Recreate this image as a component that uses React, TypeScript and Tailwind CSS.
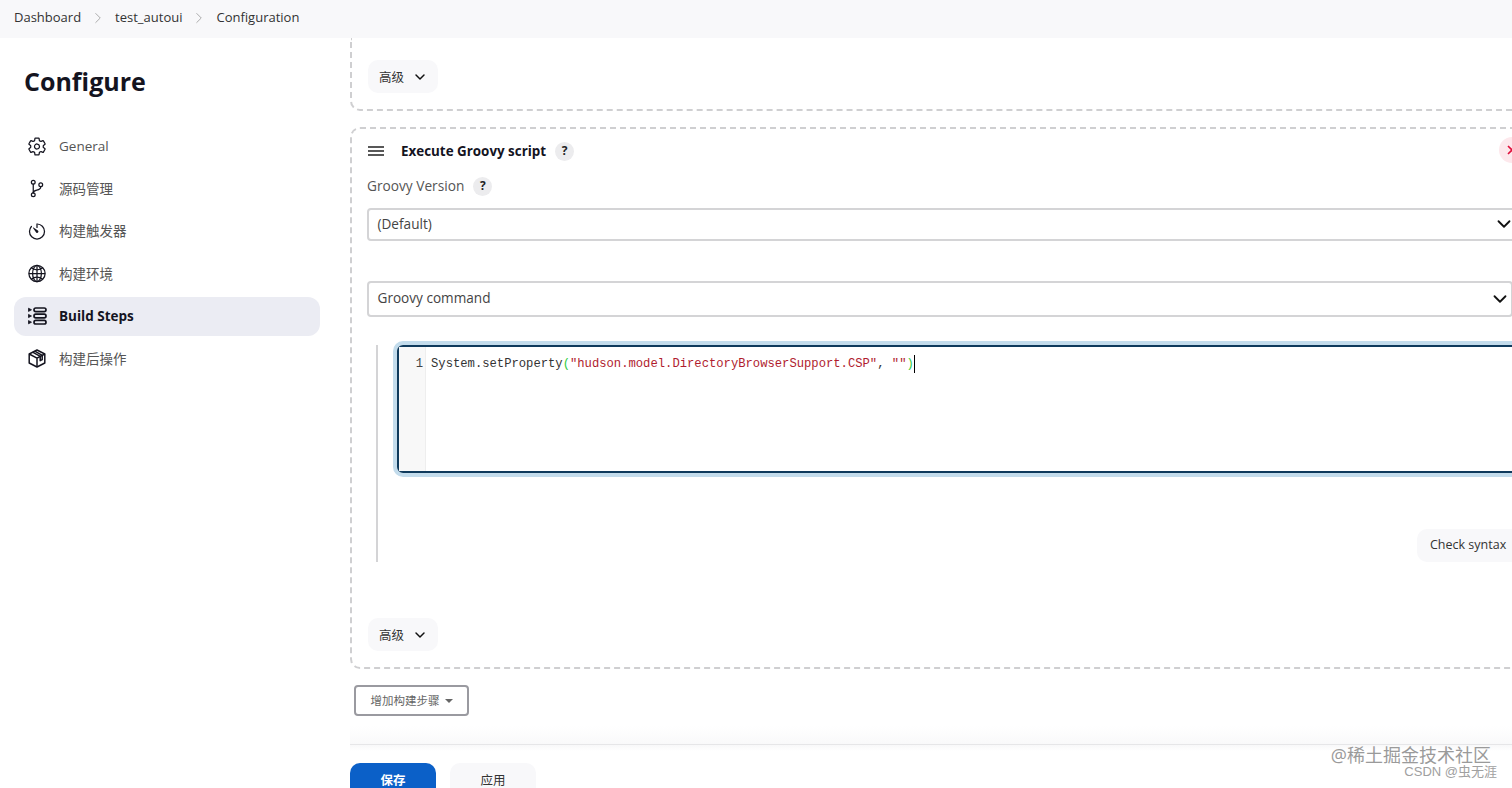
import { ChevronDown, ChevronRight } from "lucide-react";
import { IoGitBranchOutline, IoGlobeOutline, IoSettingsOutline, IoTimerOutline } from "react-icons/io5";
import type { ReactNode } from "react";

const FONT = "font-['Open_Sans','Noto_Sans_CJK_SC',sans-serif]";

function BuildStepsIcon() {
  return (
    <svg viewBox="0 0 20 20" className="h-5 w-5" fill="none" stroke="currentColor" strokeWidth="1.7">
      <rect x="7" y="2" width="12" height="3.6" rx="1.8" />
      <rect x="7" y="8.2" width="12" height="3.6" rx="1.8" />
      <rect x="7" y="14.4" width="12" height="3.6" rx="1.8" />
      <path d="M1.5 2.2l3 1.6-3 1.6zM1.5 8.4l3 1.6-3 1.6zM1.5 14.6l3 1.6-3 1.6z" fill="currentColor" strokeWidth="0.8" />
    </svg>
  );
}

// box with a packing strip over the lid
function BoxIcon() {
  return (
    <svg viewBox="0 0 20 20" className="h-[21px] w-[21px]" fill="none" stroke="currentColor" strokeWidth="1.5" strokeLinejoin="round">
      <path d="M10 1.5l7.8 4v9L10 18.5l-7.8-4v-9z" />
      <path d="M2.2 5.5L10 9.7l7.8-4.2M10 9.7v8.8" />
      <path d="M5.6 3.7l7.6 4.2v4.3l2-1V6.8L7.8 2.6" />
    </svg>
  );
}

const navItems: { label: string; icon: ReactNode; active?: boolean }[] = [
  { label: "General", icon: <IoSettingsOutline className="h-[21px] w-[21px]" /> },
  { label: "源码管理", icon: <IoGitBranchOutline className="h-[21px] w-[21px]" /> },
  { label: "构建触发器", icon: <IoTimerOutline className="h-[21px] w-[21px]" /> },
  { label: "构建环境", icon: <IoGlobeOutline className="h-[21px] w-[21px]" /> },
  { label: "Build Steps", icon: <BuildStepsIcon />, active: true },
  { label: "构建后操作", icon: <BoxIcon /> },
];

function Help() {
  return (
    <span className="flex h-[19px] w-[19px] items-center justify-center rounded-full bg-[#ececee] text-xs font-bold text-[#222]">
      ?
    </span>
  );
}

function AdvancedButton() {
  return (
    <button className="flex h-[33px] w-[70px] items-center justify-center gap-2 rounded-[10px] bg-[#f8f8fa] pl-[1px] pt-[3px] text-[12.5px] text-[#333]">
      高级
      <ChevronDown className="-mt-[3px] h-4 w-4 text-[#111]" strokeWidth={2.2} />
    </button>
  );
}

function SelectBox({ label, width, className }: { label: string; width: string; className: string }) {
  return (
    <div className={`flex items-center justify-between rounded-[4px] border-2 border-[#d4d4d6] pb-[1px] pl-[8.5px] text-[13.6px] text-[#444] ${width} ${className}`}>
      {label}
      <ChevronDown className="h-[22px] w-[22px] text-[#111]" strokeWidth={2} />
    </div>
  );
}

function Crumb() {
  return <ChevronRight className="mx-[8px] h-[18px] w-[18px] text-[#aaa]" strokeWidth={1.3} />;
}

export default function App() {
  return (
    <div className={`relative flex h-[788px] w-[1512px] flex-col overflow-hidden bg-white ${FONT}`}>
      <header className="flex h-[38px] shrink-0 items-center bg-[#f8f8fa] pb-[3px] pl-[14px] text-[13px] text-[#333]">
        <span>Dashboard</span>
        <Crumb />
        <span>test_autoui</span>
        <Crumb />
        <span>Configuration</span>
      </header>

      <div className="flex min-h-0 flex-1">
        <aside className="w-[350px] shrink-0 pl-[14px] pr-[30px]">
          <h1 className="pl-[10px] pt-[25px] text-[25px] leading-[36px] font-bold text-[#14141f]">Configure</h1>
          <nav className="mt-[28px] flex flex-col gap-[4px]">
            {navItems.map((item) => (
              <div
                key={item.label}
                className={`flex h-[38.5px] items-center gap-[12px] rounded-[12px] pl-[13px] text-[13.5px] ${
                  item.active ? "bg-[#ebecf3] font-bold text-[#14141f]" : "text-[#555]"
                }`}
              >
                <span className="flex w-[20px] justify-center text-[#14141f]">{item.icon}</span>
                {item.label}
              </div>
            ))}
          </nav>
        </aside>

        <main className="min-w-0 flex-1">
          <section className="h-[73px] w-[1190px] rounded-bl-[10px] border-b-2 border-l-2 border-dashed border-[#cfcfd1] pl-[16px] pt-[22px]">
            <AdvancedButton />
          </section>

          <section className="relative mt-[16px] h-[542px] w-[1190px] rounded-[10px] border-2 border-dashed border-[#cfcfd1] pl-[15px]">
            <div className="flex h-[44px] items-center pl-[1px]">
              <svg viewBox="0 0 16 10" className="h-[10px] w-[16px]" stroke="#222" strokeWidth="1.5">
                <path d="M0 1h16M0 5h16M0 9h16" />
              </svg>
              <span className="ml-[17px] text-[13.4px] font-bold text-[#14141f]">Execute Groovy script</span>
              <span className="ml-[9px]"><Help /></span>
            </div>

            <div className="mt-[3px] flex h-[20px] items-center gap-[9px] text-[13.7px] text-[#555]">
              Groovy Version
              <Help />
            </div>

            <SelectBox label="(Default)" width="w-[1150px]" className="mt-[12px] h-[33px]" />
            <SelectBox label="Groovy command" width="w-[1146px]" className="mt-[40px] h-[36px]" />

            <div className="mt-[28px] ml-[9px] flex h-[217px] w-[1141px] flex-col border-l-2 border-[#d4d4d6] pl-[19px]">
              <div className="flex h-[128px] w-[1120px] rounded-[6px] border-2 border-[#0f3a5c] font-['Liberation_Mono',monospace] text-[12.2px] shadow-[0_0_0_4px_#c3dcec]">
                <div className="w-[27px] shrink-0 border-r border-[#eeeeee] bg-[#f8f8f8] pr-[2px] pt-[10px] text-right leading-[14px] text-[#444]">1</div>
                <div className="flex h-[18px] pl-[5px] pt-[8px] leading-[18px] text-[#333]">
                  <span>System.setProperty</span>
                  <span className="text-[#2ecc40]">(</span>
                  <span className="text-[#b01c2e]">"hudson.model.DirectoryBrowserSupport.CSP"</span>
                  <span>,&nbsp;</span>
                  <span className="text-[#b01c2e]">""</span>
                  <span className="text-[#2ecc40]">)</span>
                  <span className="h-[18px] border-l border-black" />
                </div>
              </div>
              <div className="ml-[1020px] mt-[56px] flex h-[33px] w-[110px] items-center rounded-[10px] bg-[#f8f8fa] pb-[1px] pl-[13px] text-[12.5px] text-[#333]">
                Check syntax
              </div>
            </div>

            <div className="mt-[56px] pl-[1px]">
              <AdvancedButton />
            </div>

            <span className="absolute right-[13px] top-[8px] flex h-[26px] w-[26px] items-center justify-center rounded-full bg-[#fde8ec] text-[#e0103c]">
              <svg viewBox="0 0 10 10" className="h-[10px] w-[10px]" stroke="currentColor" strokeWidth="1.6">
                <path d="M1 1l8 8M9 1l-8 8" />
              </svg>
            </span>
          </section>

          <button className="ml-[4px] mt-[16px] flex h-[31px] w-[115px] items-center justify-center gap-[5px] rounded-[4px] border-2 border-[#9a9aa0] text-[11.5px] text-[#666]">
            增加构建步骤
            <span className="mt-[1px] border-x-[4px] border-t-[4px] border-x-transparent border-t-[#666]" />
          </button>

          <div className="mt-[10px] h-[19px] border-b border-[#e6e6e8] bg-gradient-to-b from-white to-[#f9f9fa]" />
          <div className="h-[6px] bg-gradient-to-b from-[#f8f8f9] to-white" />

          <div className="mt-[12px] flex gap-[14px]">
            <button className="h-[25px] w-[86px] rounded-t-[10px] bg-[#0b60c8] pt-[11px] text-[12.5px] leading-[14px] font-bold text-white">保存</button>
            <button className="h-[25px] w-[86px] rounded-t-[10px] bg-[#f8f8fa] pt-[11px] text-[12.5px] leading-[14px] text-[#333]">应用</button>
          </div>
        </main>
      </div>

      <div className="pointer-events-none absolute right-[21px] top-[745px] text-[18px] leading-[20px] text-[#9a9a9a]">@稀土掘金技术社区</div>
      <div className="pointer-events-none absolute right-[15px] top-[765px] font-['Liberation_Sans','Noto_Sans_CJK_SC',sans-serif] text-[13px] leading-[14px] text-[#a0a0a0]">CSDN @虫无涯</div>
    </div>
  );
}
